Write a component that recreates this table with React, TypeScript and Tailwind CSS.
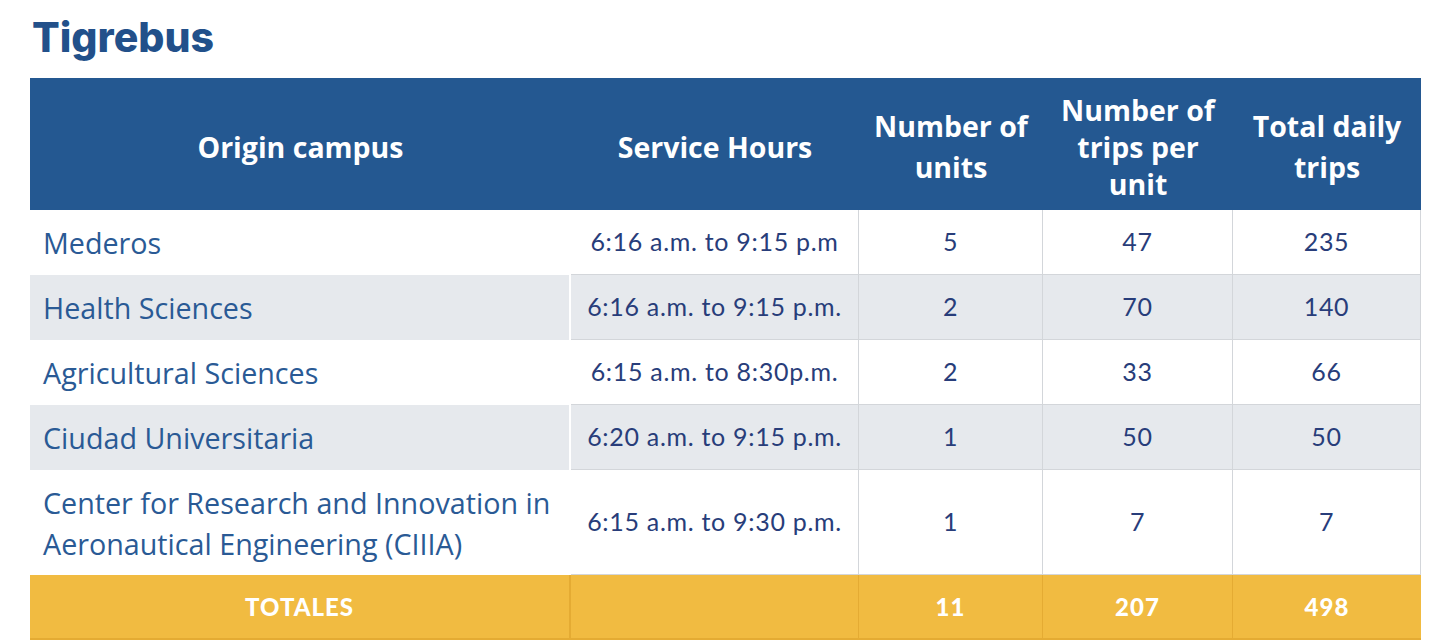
const rows = [
  { campus: ['Mederos'], hours: '6:16 a.m. to 9:15 p.m', units: '5', trips: '47', total: '235', tall: false },
  { campus: ['Health Sciences'], hours: '6:16 a.m. to 9:15 p.m.', units: '2', trips: '70', total: '140', tall: false },
  { campus: ['Agricultural Sciences'], hours: '6:15 a.m. to 8:30p.m.', units: '2', trips: '33', total: '66', tall: false },
  { campus: ['Ciudad Universitaria'], hours: '6:20 a.m. to 9:15 p.m.', units: '1', trips: '50', total: '50', tall: false },
  {
    campus: ['Center for Research and Innovation in', 'Aeronautical Engineering (CIIIA)'],
    hours: '6:15 a.m. to 9:30 p.m.',
    units: '1',
    trips: '7',
    total: '7',
    tall: true,
  },
];

const sans = "font-['Open_Sans',_'Liberation_Sans',_sans-serif]";
const geo = "font-['Lato',_'Liberation_Sans',_sans-serif]";
const head = `h-[132px] pt-[6px] bg-[#245891] flex items-center justify-center text-center text-white font-bold text-[28.5px] ${sans}`;
const total = `h-[65px] bg-[#f1bb41] border-b-2 border-[#e4ab33] flex items-center justify-center text-white font-black text-[24px] tracking-[1px] ${geo}`;

export default function App() {
  return (
    <div className="w-[1436px] h-[644px] bg-white overflow-hidden">
      <h1 className="pl-[32px] pt-[12px] h-[78px] text-[41px] leading-[50px] font-extrabold text-[#22508a] font-['Inter',_sans-serif]">
        Tigrebus
      </h1>

      <div className="ml-[30px] grid grid-cols-[541px_288px_184px_190px_188px]">
        {/* header */}
        <div className={`${head} leading-[41px]`}>Origin campus</div>
        <div className={`${head} leading-[41px]`}>Service Hours</div>
        <div className={`${head} leading-[41px]`}>
          Number of<br />units
        </div>
        <div className={`${head} leading-[37px]`}>
          Number of<br />trips per<br />unit
        </div>
        <div className={`${head} leading-[41px]`}>
          Total daily<br />trips
        </div>

        {rows.map((r, i) => {
          const bg = i % 2 === 1 ? 'bg-[#e6e9ed]' : 'bg-white';
          const h = r.tall ? 'h-[105px]' : 'h-[65px]';
          const cell = `${h} ${bg} flex items-center justify-center text-[25px] tracking-[0.7px] text-[#283d7a] border-b border-r border-[#d3d6da] ${geo}`;
          return (
            <div key={i} className="contents">
              <div className={`${h} ${bg} border-r-2 border-white flex flex-col justify-center pl-[13px] text-[28.7px] leading-[41px] text-[#2a5a95] ${sans}`}>
                {r.campus.map(c => (
                  <span key={c}>{c}</span>
                ))}
              </div>
              <div className={cell}>{r.hours}</div>
              <div className={cell}>{r.units}</div>
              <div className={cell}>{r.trips}</div>
              <div className={cell}>{r.total}</div>
            </div>
          );
        })}

        {/* totales */}
        <div className={`${total} border-r-2 tracking-[1.5px]`}>TOTALES</div>
        <div className={`${total} border-r`} />
        <div className={`${total} border-r`}>11</div>
        <div className={`${total} border-r`}>207</div>
        <div className={total}>498</div>
      </div>
    </div>
  );
}
